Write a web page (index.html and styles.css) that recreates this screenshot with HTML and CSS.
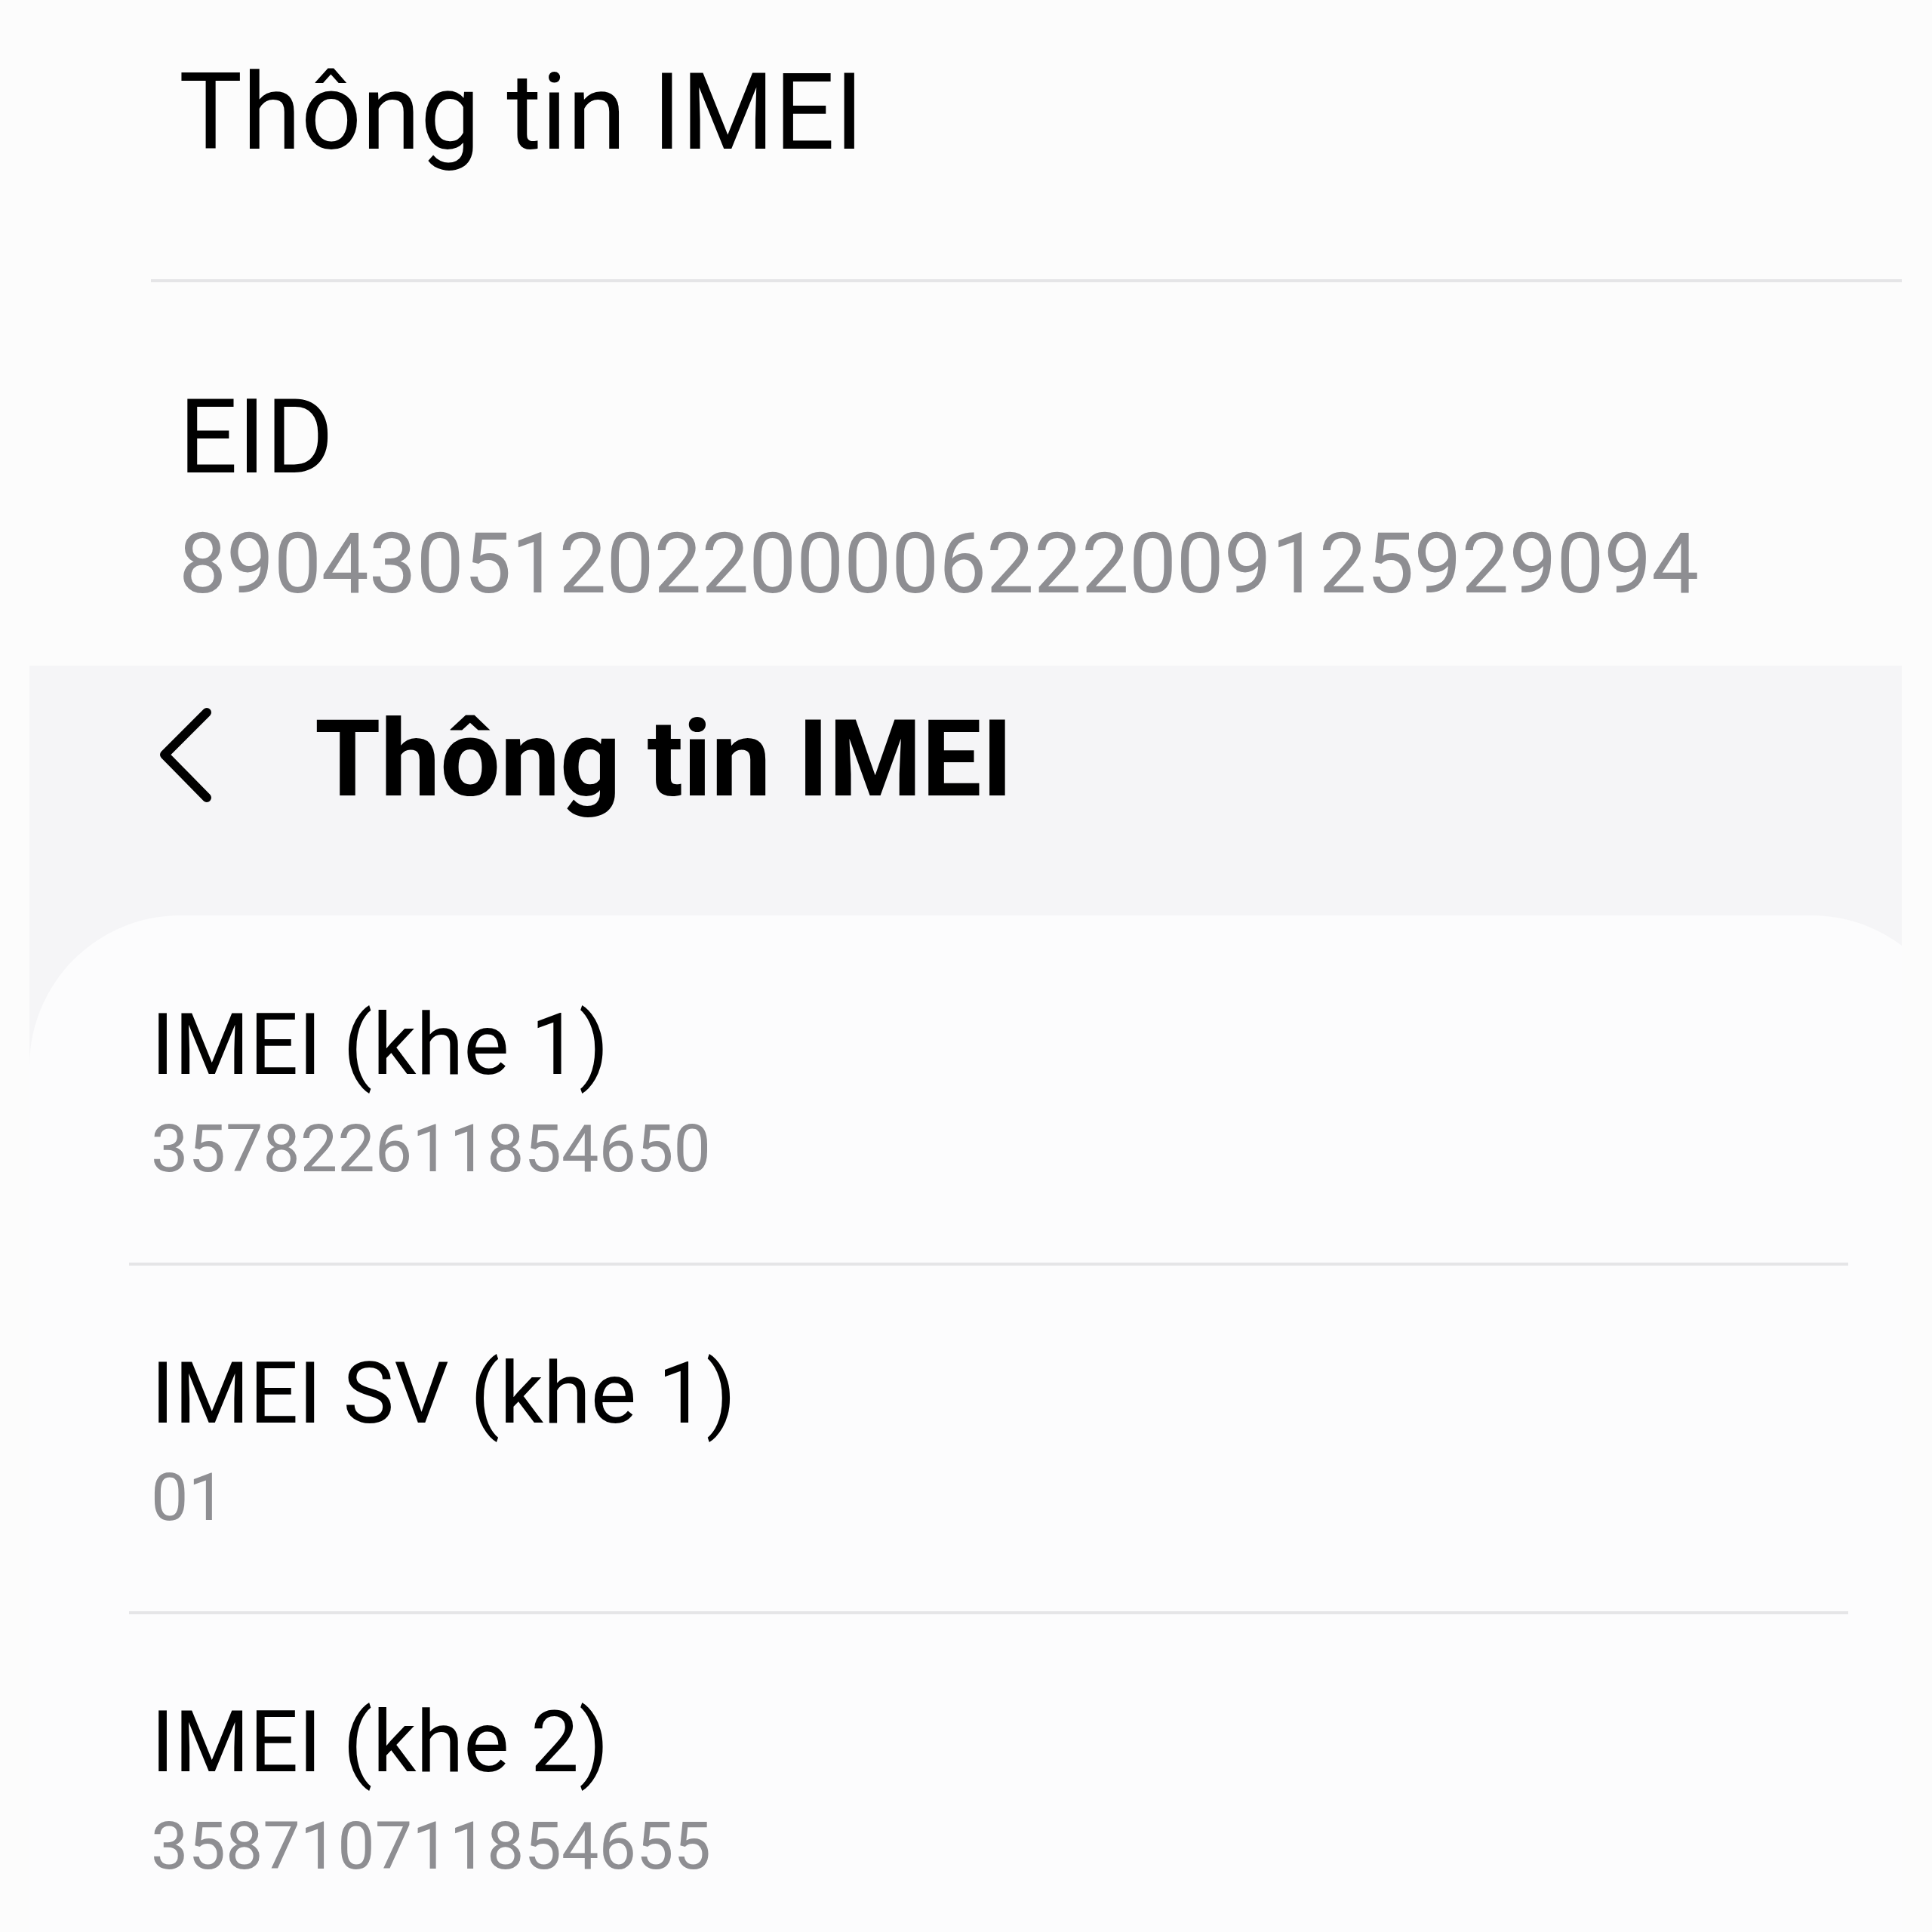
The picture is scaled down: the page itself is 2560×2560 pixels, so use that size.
FILE: index.html
```html
<!DOCTYPE html>
<html lang="vi">
<head>
<meta charset="utf-8">
<title>Thông tin IMEI</title>
<link rel="stylesheet" href="styles.css">
</head>
<body>
<section class="zoomed">
  <div class="zoomed-title">Thông tin IMEI</div>
  <div class="zoomed-divider"></div>
  <div class="zoomed-label">EID</div>
  <div class="zoomed-value">89043051202200006222009125929094</div>
</section>
<section class="phone">
  <header class="appbar">
    <svg class="back" viewBox="0 0 70 141" width="70" height="141" aria-hidden="true">
      <path d="M64 9 L8 65 L64 122" fill="none" stroke="#000" stroke-width="12" stroke-linecap="round" stroke-linejoin="round"/>
    </svg>
    <h1 class="appbar-title">Thông tin IMEI</h1>
  </header>
  <div class="card">
    <div class="row">
      <div class="row-title">IMEI (khe 1)</div>
      <div class="row-value">357822611854650</div>
    </div>
    <div class="divider"></div>
    <div class="row">
      <div class="row-title">IMEI SV (khe 1)</div>
      <div class="row-value">01</div>
    </div>
    <div class="divider"></div>
    <div class="row">
      <div class="row-title">IMEI (khe 2)</div>
      <div class="row-value">358710711854655</div>
    </div>
  </div>
</section>
</body>
</html>
```
FILE: styles.css
```css
html, body {
  margin: 0;
  padding: 0;
}
body {
  width: 2560px;
  height: 2560px;
  overflow: hidden;
  background: #fcfcfc;
  font-family: Roboto, "Noto Sans", sans-serif;
  color: #000;
}

.zoomed {
  height: 882px;
  box-sizing: border-box;
  padding-top: 78px;
  padding-left: 237px;
  width: 2520px;
}
.zoomed-title {
  font-size: 141px;
  line-height: 141px;
  font-weight: 400;
}
.zoomed-divider {
  margin-top: 151px;
  margin-left: -37px;
  height: 4px;
  background: #e5e5e7;
}
.zoomed-label {
  margin-top: 137px;
  font-size: 137px;
  line-height: 137px;
}
.zoomed-value {
  margin-top: 43px;
  font-size: 112px;
  line-height: 112px;
  color: #8e8e92;
}

.phone {
  margin-left: 39px;
  width: 2481px;
  height: 1678px;
  background: #f5f5f7;
  overflow: hidden;
}
.appbar {
  display: flex;
  align-items: flex-start;
  padding-top: 53px;
  padding-left: 171px;
  height: 141px;
  padding-bottom: 137px;
}
.back {
  display: block;
  flex: none;
}
.appbar-title {
  margin: 0 0 0 137px;
  font-size: 141px;
  line-height: 141px;
  font-weight: 700;
}

.card {
  width: 2561px;
  min-height: 1400px;
  background: #fcfcfd;
  border-radius: 200px 200px 0 0;
  padding-top: 114px;
}
.row {
  padding-left: 161px;
  padding-bottom: 107px;
}
.row-title {
  font-size: 114px;
  line-height: 114px;
}
.row-value {
  margin-top: 37px;
  font-size: 88px;
  line-height: 88px;
  color: #8e8e92;
}
.divider {
  height: 4px;
  margin: 0 151px 112px 132px;
  background: #e5e5e7;
}
```
